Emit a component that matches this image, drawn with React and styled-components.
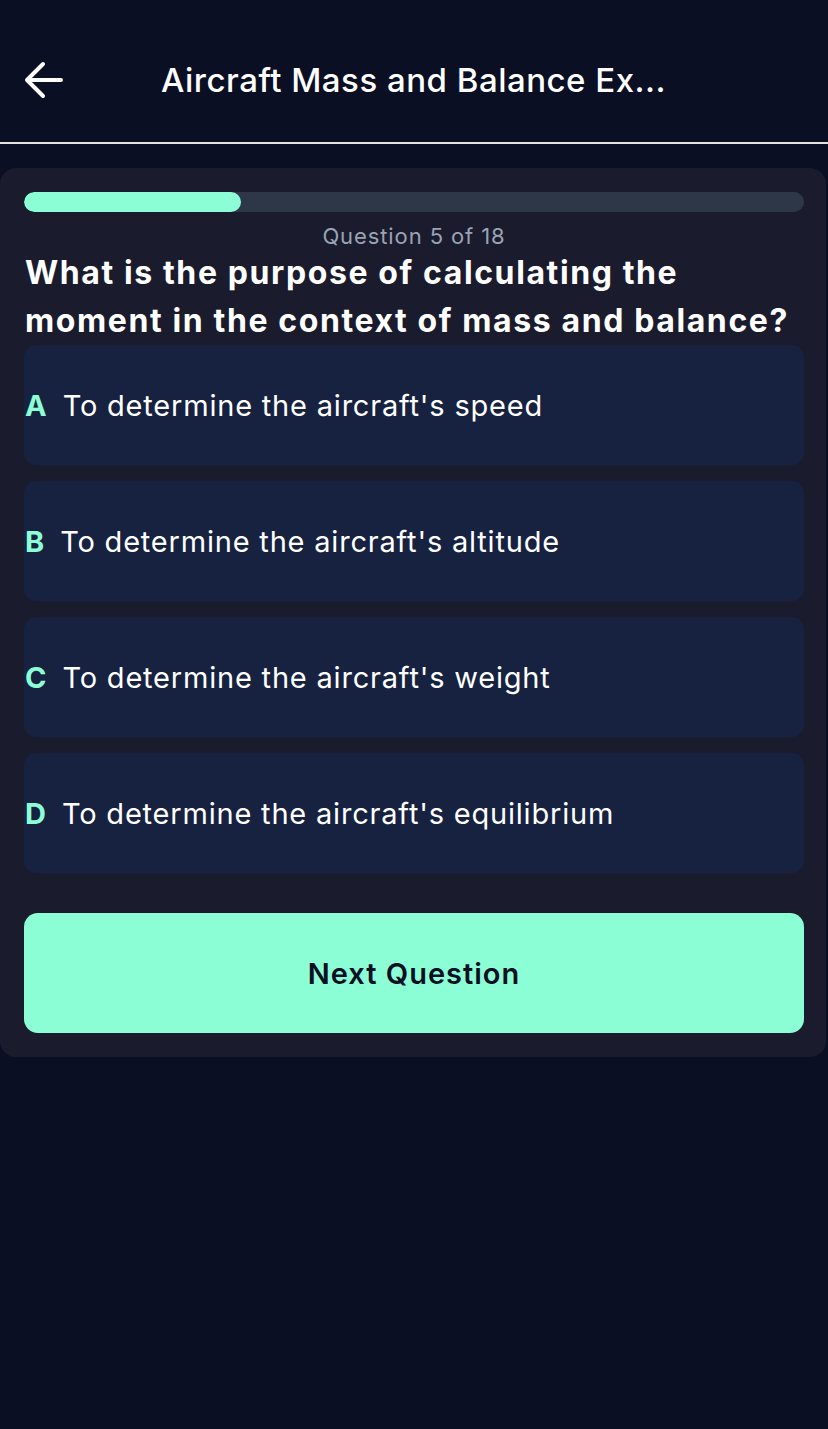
import React from 'react';
import styled, { createGlobalStyle } from 'styled-components';

const GlobalStyle = createGlobalStyle`
  html, body {
    margin: 0;
    padding: 0;
    background-color: #0a0f23;
  }
  body {
    font-family: Inter, "Noto Sans", "Liberation Sans", sans-serif;
    min-height: 100vh;
  }
`;

const options = [
  { letter: 'A', text: "To determine the aircraft's speed" },
  { letter: 'B', text: "To determine the aircraft's altitude" },
  { letter: 'C', text: "To determine the aircraft's weight" },
  { letter: 'D', text: "To determine the aircraft's equilibrium" },
];

const current = 5;
const total = 18;

const App = () => {
  return (
    <Page>
      <GlobalStyle />
      <Header>
        <BackButton aria-label="Back">
          <svg width="40" height="40" viewBox="0 0 40 40" fill="none">
            <path
              d="M37 20H3M19 4L3 20L19 36"
              stroke="#ffffff"
              strokeWidth="4"
              strokeLinecap="round"
              strokeLinejoin="round"
            />
          </svg>
        </BackButton>
        <Title>Aircraft Mass and Balance Ex...</Title>
      </Header>

      <Card>
        <Track>
          <Fill style={{ width: `${(current / total) * 100}%` }} />
        </Track>
        <Counter>Question {current} of {total}</Counter>
        <Question>
          What is the purpose of calculating the moment in the context of mass and balance?
        </Question>

        <OptionList>
          {options.map((o) => (
            <Option key={o.letter}>
              <Letter>{o.letter}</Letter>
              <OptionText>{o.text}</OptionText>
            </Option>
          ))}
        </OptionList>

        <NextButton>Next Question</NextButton>
      </Card>
    </Page>
  );
};

const Page = styled.div`
  min-height: 100vh;
  background-color: #0a0f23;
  color: #ffffff;
`;

const Header = styled.header`
  height: 144px;
  box-sizing: border-box;
  display: flex;
  align-items: center;
  padding: 18px 0 0 24px;
  border-bottom: 2px solid #e2e2e2;
`;

const BackButton = styled.button`
  background: none;
  border: none;
  padding: 0;
  width: 40px;
  height: 40px;
  display: flex;
  align-items: center;
  justify-content: center;
  cursor: pointer;
`;

const Title = styled.h1`
  margin: 0 0 0 97px;
  font-size: 33px;
  font-weight: 500;
  color: #ffffff;
  white-space: nowrap;
  letter-spacing: 0.5px;
`;

const Card = styled.main`
  margin: 24px 2px 0 0;
  background-color: #1b1b2e;
  border-radius: 16px;
  padding: 24px 22px 24px 24px;
  display: flex;
  flex-direction: column;
`;

const Track = styled.div`
  height: 20px;
  border-radius: 10px;
  background-color: #2e3748;
  overflow: hidden;
`;

const Fill = styled.div`
  height: 100%;
  border-radius: 10px;
  background-color: #8cfed6;
`;

const Counter = styled.div`
  margin-top: 11px;
  text-align: center;
  font-size: 22px;
  line-height: 26px;
  letter-spacing: 0.9px;
  color: #9aa3b3;
`;

const Question = styled.h2`
  margin: 0;
  font-size: 32px;
  line-height: 48px;
  font-weight: 700;
  letter-spacing: 1.6px;
  color: #ffffff;
  padding-left: 1px;
`;

const OptionList = styled.div`
  display: flex;
  flex-direction: column;
  gap: 16px;
`;

const Option = styled.div`
  height: 120px;
  border-radius: 12px;
  background-color: #172240;
  display: flex;
  align-items: center;
  gap: 16px;
  padding-left: 1px;
  cursor: pointer;
`;

const Letter = styled.span`
  font-size: 29px;
  font-weight: 700;
  color: #8cfed6;
`;

const OptionText = styled.span`
  font-size: 29px;
  letter-spacing: 0.8px;
  color: #ffffff;
`;

const NextButton = styled.button`
  margin-top: 40px;
  height: 120px;
  border: none;
  border-radius: 14px;
  background-color: #8cfed6;
  color: #0a0f23;
  font-family: inherit;
  font-size: 29px;
  font-weight: 600;
  letter-spacing: 1px;
  cursor: pointer;
`;

export default App;
